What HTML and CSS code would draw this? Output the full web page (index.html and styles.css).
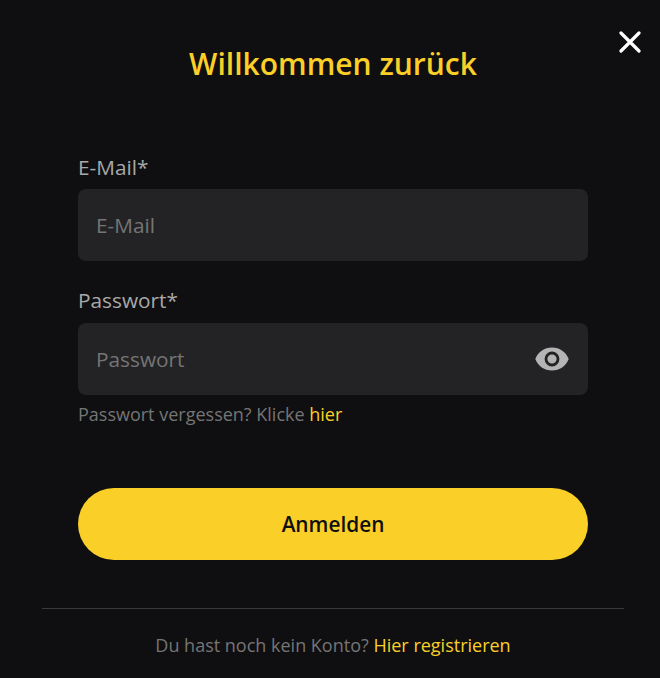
FILE: index.html
```html
<!DOCTYPE html>
<html>
<head>
<meta charset="utf-8">
<title>Willkommen zurück</title>
<link rel="stylesheet" href="styles.css">
</head>
<body>

<div class="modal">
  <button class="close" title="close">
    <svg width="22" height="22" viewBox="0 0 22 22"><path d="M2 2L20 20M20 2L2 20" stroke="#fff" stroke-width="3.200" stroke-linecap="round"/></svg>
  </button>

  <h1 class="title">Willkommen zurück</h1>

  <form class="form">
    <label class="label">E-Mail*</label>
    <div class="field"><span class="placeholder">E-Mail</span></div>

    <label class="label label-pw">Passwort*</label>
    <div class="field">
      <span class="placeholder">Passwort</span>
      <svg class="eye" width="34" height="24" viewBox="0 0 34 24">
        <path fill-rule="evenodd" fill="#b4b4b4" d="M17 .5C9.300.5 3 5 .3 12 3 19 9.300 23.500 17 23.500S31 19 33.700 12C31 5 24.700.5 17 .5zM17 4.600a7.400 7.400 0 1 1 0 14.800 7.400 7.400 0 0 1 0-14.800zM17 7.400a4.600 4.600 0 1 0 0 9.200 4.600 4.600 0 0 0 0-9.200z"/>
      </svg>
    </div>
    <p class="forgot">Passwort vergessen? Klicke <a class="link">hier</a></p>

    <button class="submit" type="button">Anmelden</button>
  </form>

  <div class="footer">Du hast noch kein Konto? <a class="link">Hier registrieren</a></div>
</div>

</body>
</html>
```

FILE: styles.css
```css
html, body {
  margin: 0;
  background: #0f0f11;
}

.modal {
  position: relative;
  box-sizing: border-box;
  height: 678px;
  padding: 42px 36px 0 42px;
  font-family: "Open Sans", "Noto Sans", sans-serif;
  overflow: hidden;
}

.close {
  position: absolute;
  top: 31px;
  left: 619px;
  width: 22px;
  height: 22px;
  padding: 0;
  border: none;
  background: none;
}

.close svg { display: block; }

.title {
  margin: 0;
  height: 44px;
  line-height: 44px;
  font-size: 30px;
  font-weight: 600;
  text-align: center;
  color: #fad028;
}

.form {
  display: flex;
  flex-direction: column;
  margin: 0 36px;
  padding-top: 64px;
}

.label {
  height: 39px;
  line-height: 34px;
  font-size: 20.800px;
  font-weight: 500;
  color: #a9a9a9;
}

.label-pw { margin-top: 22px; height: 40px; }

.field {
  display: flex;
  align-items: center;
  justify-content: space-between;
  box-sizing: border-box;
  height: 72px;
  padding: 0 18px;
  border-radius: 8px;
  background: #232325;
}

.placeholder {
  font-size: 20.800px;
  color: #757575;
}

.eye { margin-right: 1px; }

.forgot {
  margin: 6px 0 0;
  height: 26px;
  line-height: 26px;
  font-size: 18px;
  color: #757575;
}

.link { color: #fad028; }

.submit {
  height: 72px;
  margin-top: 61px;
  border: none;
  border-radius: 36px;
  background: #fad028;
  color: #0f0f11;
  font-family: inherit;
  font-size: 20.800px;
  font-weight: 600;
}

.footer {
  margin-top: 48px;
  padding-top: 23px;
  border-top: 1px solid #3a3a3c;
  font-size: 18px;
  line-height: 26px;
  text-align: center;
  color: #757575;
}
```
